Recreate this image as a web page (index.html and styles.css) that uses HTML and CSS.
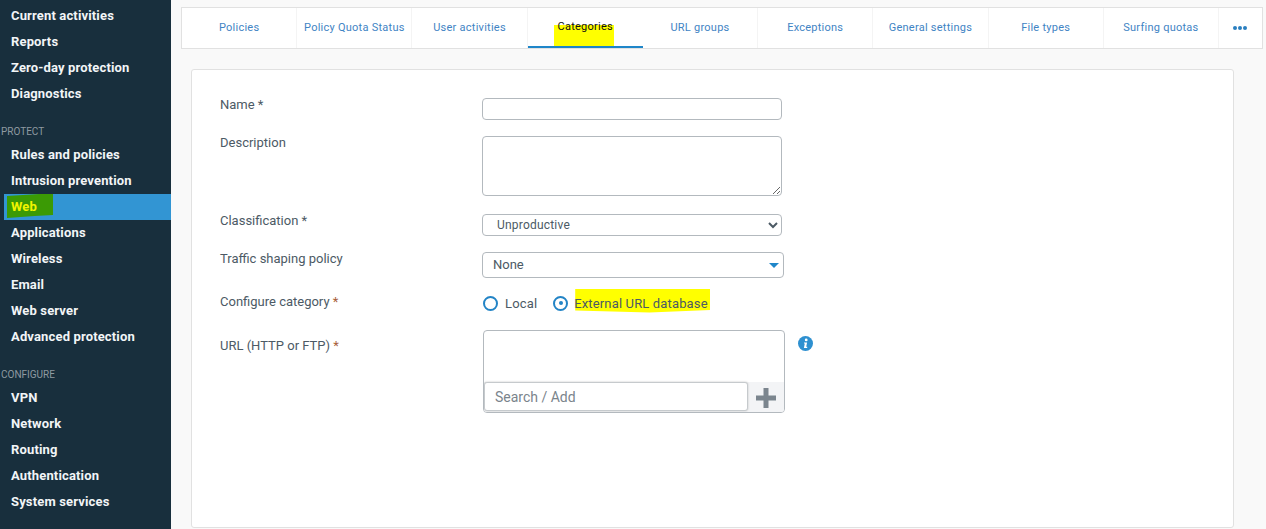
FILE: index.html
```html
<!DOCTYPE html>
<html lang="en">
<head>
<meta charset="utf-8">
<title>Categories</title>
<link rel="stylesheet" href="styles.css">
</head>
<body>
<div class="app">
  <nav class="sidebar">
    <ul class="group first">
      <li class="item">Current activities</li>
      <li class="item">Reports</li>
      <li class="item">Zero-day protection</li>
      <li class="item">Diagnostics</li>
    </ul>
    <div class="heading">PROTECT</div>
    <ul class="group">
      <li class="item">Rules and policies</li>
      <li class="item">Intrusion prevention</li>
      <li class="item active"><span class="mark-green"></span><span class="web-label">Web</span></li>
      <li class="item">Applications</li>
      <li class="item">Wireless</li>
      <li class="item">Email</li>
      <li class="item">Web server</li>
      <li class="item">Advanced protection</li>
    </ul>
    <div class="heading heading-2">CONFIGURE</div>
    <ul class="group">
      <li class="item">VPN</li>
      <li class="item">Network</li>
      <li class="item">Routing</li>
      <li class="item">Authentication</li>
      <li class="item">System services</li>
    </ul>
  </nav>
  <main class="content">
    <div class="tabs">
      <div class="tab">Policies</div>
      <div class="tab">Policy Quota Status</div>
      <div class="tab">User activities</div>
      <div class="tab selected"><span class="mark-yellow-tab"></span><span class="tab-label">Categories</span></div>
      <div class="tab">URL groups</div>
      <div class="tab">Exceptions</div>
      <div class="tab">General settings</div>
      <div class="tab">File types</div>
      <div class="tab">Surfing quotas</div>
      <div class="tab more"><span></span><span></span><span></span></div>
    </div>
    <section class="card">
      <div class="row row-name">
        <label class="label">Name *</label>
        <input class="field input" type="text">
      </div>
      <div class="row row-desc">
        <label class="label">Description</label>
        <textarea class="field area"></textarea>
      </div>
      <div class="row row-class">
        <label class="label">Classification *</label>
        <select class="field native"><option>Unproductive</option></select>
      </div>
      <div class="row row-shape">
        <label class="label">Traffic shaping policy</label>
        <div class="field custom">None<span class="caret"></span></div>
      </div>
      <div class="row row-radio">
        <label class="label">Configure category <b class="req">*</b></label>
        <div class="radios">
          <span class="radio"></span><span class="radio-text">Local</span>
          <span class="radio on"></span>
          <span class="radio-text ext"><span class="mark-yellow-ext"></span><span class="ext-label">External URL database</span></span>
        </div>
      </div>
      <div class="row row-url">
        <label class="label">URL (HTTP or FTP) <b class="req">*</b></label>
        <div class="urlbox">
          <div class="urllist"></div>
          <div class="urladd">
            <div class="search">Search / Add</div>
            <div class="plus">
              <svg width="20" height="20" viewBox="0 0 20 20"><path d="M7.5 0h5v7.5H20v5h-7.5V20h-5v-7.5H0v-5h7.5z" fill="#7b858e"/></svg>
            </div>
          </div>
        </div>
        <svg class="info" width="15" height="15" viewBox="0 0 15 15"><circle cx="7.5" cy="7.5" r="7.5" fill="#2e90d0"/><circle cx="8.2" cy="3.9" r="1.4" fill="#fff"/><path d="M6 6.4h3.1L8.2 10.8h1v1.2H5.9l.9-4.4H6z" fill="#fff"/></svg>
      </div>
    </section>
  </main>
</div>
</body>
</html>
```
FILE: styles.css
```css
* { box-sizing: border-box; }
html, body { margin: 0; padding: 0; height: 529px; overflow: hidden; }
body { font-family: "Roboto", "Liberation Sans", sans-serif; background: #f9f9f9; color: #4c5a65; }
.app { display: flex; height: 529px; }

.sidebar { width: 171px; flex: none; background: #182f3d; color: #f2f5f7; font-size: 13px; font-weight: 700; letter-spacing: .15px; }
.group { list-style: none; margin: 0; padding: 0; }
.first { padding-top: 3px; }
.item { height: 26px; line-height: 26px; padding-left: 11px; margin-left: 4px; text-indent: -4px; position: relative; }
.item.active { background: #3295d3; }
.web-label { position: relative; color: #f0f500; }
.mark-green { position: absolute; left: 3px; top: 0; width: 46px; height: 24px; background: #3b9a05; clip-path: polygon(0 8%, 70% 0, 100% 0, 100% 88%, 60% 92%, 30% 96%, 0 100%); }
.heading { font-size: 10px; font-weight: 400; letter-spacing: 0; color: #8f9aa1; padding-left: 1px; height: 12px; line-height: 12px; margin-top: 19px; margin-bottom: 4px; }
.heading-2 { margin-top: 19px; }

.content { flex: 1; min-width: 0; padding: 7px 3px 0 10px; }
.tabs { display: grid; grid-template-columns: repeat(9, 1fr) 43px; height: 42px; background: #fff; border: 1px solid #e1e1e1; }
.tab { display: flex; align-items: center; justify-content: center; font-size: 11px; letter-spacing: .25px; color: #3f84c4; border-right: 1px solid #f4f4f4; padding-bottom: 1px; white-space: nowrap; position: relative; }
.tab:last-child { border-right: 0; }
.tab.selected { color: #111; border-bottom: 2px solid #1f86c9; border-right: 0; padding-bottom: 2px; }
.tab-label { position: relative; }
.mark-yellow-tab { position: absolute; left: 26px; top: 17px; width: 60px; height: 21px; background: #ffff00; }
.more { gap: 1px; }
.more span { width: 4px; height: 4px; border-radius: 50%; background: #2a7fc0; }

.card { margin: 20px 0 0 10px; width: 1043px; height: 459px; background: #fff; border: 1px solid #e1e1e1; border-radius: 3px; padding: 0 0 0 28px; font-size: 13px; }
.row { display: flex; align-items: flex-start; position: relative; }
.label { width: 262px; flex: none; line-height: 16px; color: #4c5a65; }
.req { font-weight: 400; color: #a8603a; }
.field { border: 1px solid #b3b9be; border-radius: 4px; background: #fff; margin: 0; display: block; font: inherit; color: #4c5a65; }
.row-name { margin-top: 28px; }
.row-name .label { margin-top: -1px; }
.input { width: 300px; height: 22px; }
.row-desc { margin-top: 16px; }
.row-desc .label { margin-top: -1px; }
.area { width: 300px; height: 60px; resize: both; }
.row-class { margin-top: 18px; }
.row-class .label { margin-top: -1px; }
.native { width: 300px; height: 22px; font-size: 12px; padding-left: 10px; letter-spacing: .2px; }
.row-shape { margin-top: 16px; }
.row-shape .label { margin-top: -1px; }
.custom { width: 302px; height: 26px; line-height: 24px; padding-left: 10px; position: relative; }
.caret { position: absolute; right: 4px; top: 10px; border-left: 5px solid transparent; border-right: 5px solid transparent; border-top: 5px solid #1f86c9; }
.row-radio { margin-top: 15px; }
.row-radio .label { margin-top: 1px; }
.radios { display: flex; align-items: center; height: 20px; margin-left: 1px; margin-top: 0; }
.radio { width: 15px; height: 15px; border: 2px solid #2384c6; border-radius: 50%; background: #fff; flex: none; position: relative; }
.radio.on::after { content: ""; position: absolute; left: 3.5px; top: 3.5px; width: 4px; height: 4px; background: #2384c6; border-radius: 50%; }
.radio-text { margin-left: 7px; margin-right: 16px; white-space: nowrap; position: relative; letter-spacing: .15px; }
.ext { margin-left: 6px; }
.ext-label { position: relative; }
.mark-yellow-ext { position: absolute; left: 1px; top: -7px; width: 135px; height: 24px; background: #ffff00; clip-path: polygon(0 0, 100% 0, 100% 90%, 55% 100%, 0 92%); }
.row-url { margin-top: 17px; }
.row-url .label { margin-top: 8px; }
.urlbox { width: 302px; height: 83px; margin-left: 1px; border: 1px solid #b3b9be; border-radius: 4px; display: flex; flex-direction: column; overflow: hidden; }
.urllist { flex: 1; }
.urladd { display: flex; height: 30px; background: #f3f4f6; }
.search { width: 264px; height: 29px; line-height: 29px; border: 1px solid #c6cacd; border-radius: 3px; background: #fff; padding-left: 10px; font-size: 14px; color: #7a848c; box-shadow: 0 0 2px #bbb; }
.plus { flex: 1; display: flex; align-items: center; justify-content: center; padding-top: 1px; }
.info { position: absolute; left: 578px; top: 6px; }
```
